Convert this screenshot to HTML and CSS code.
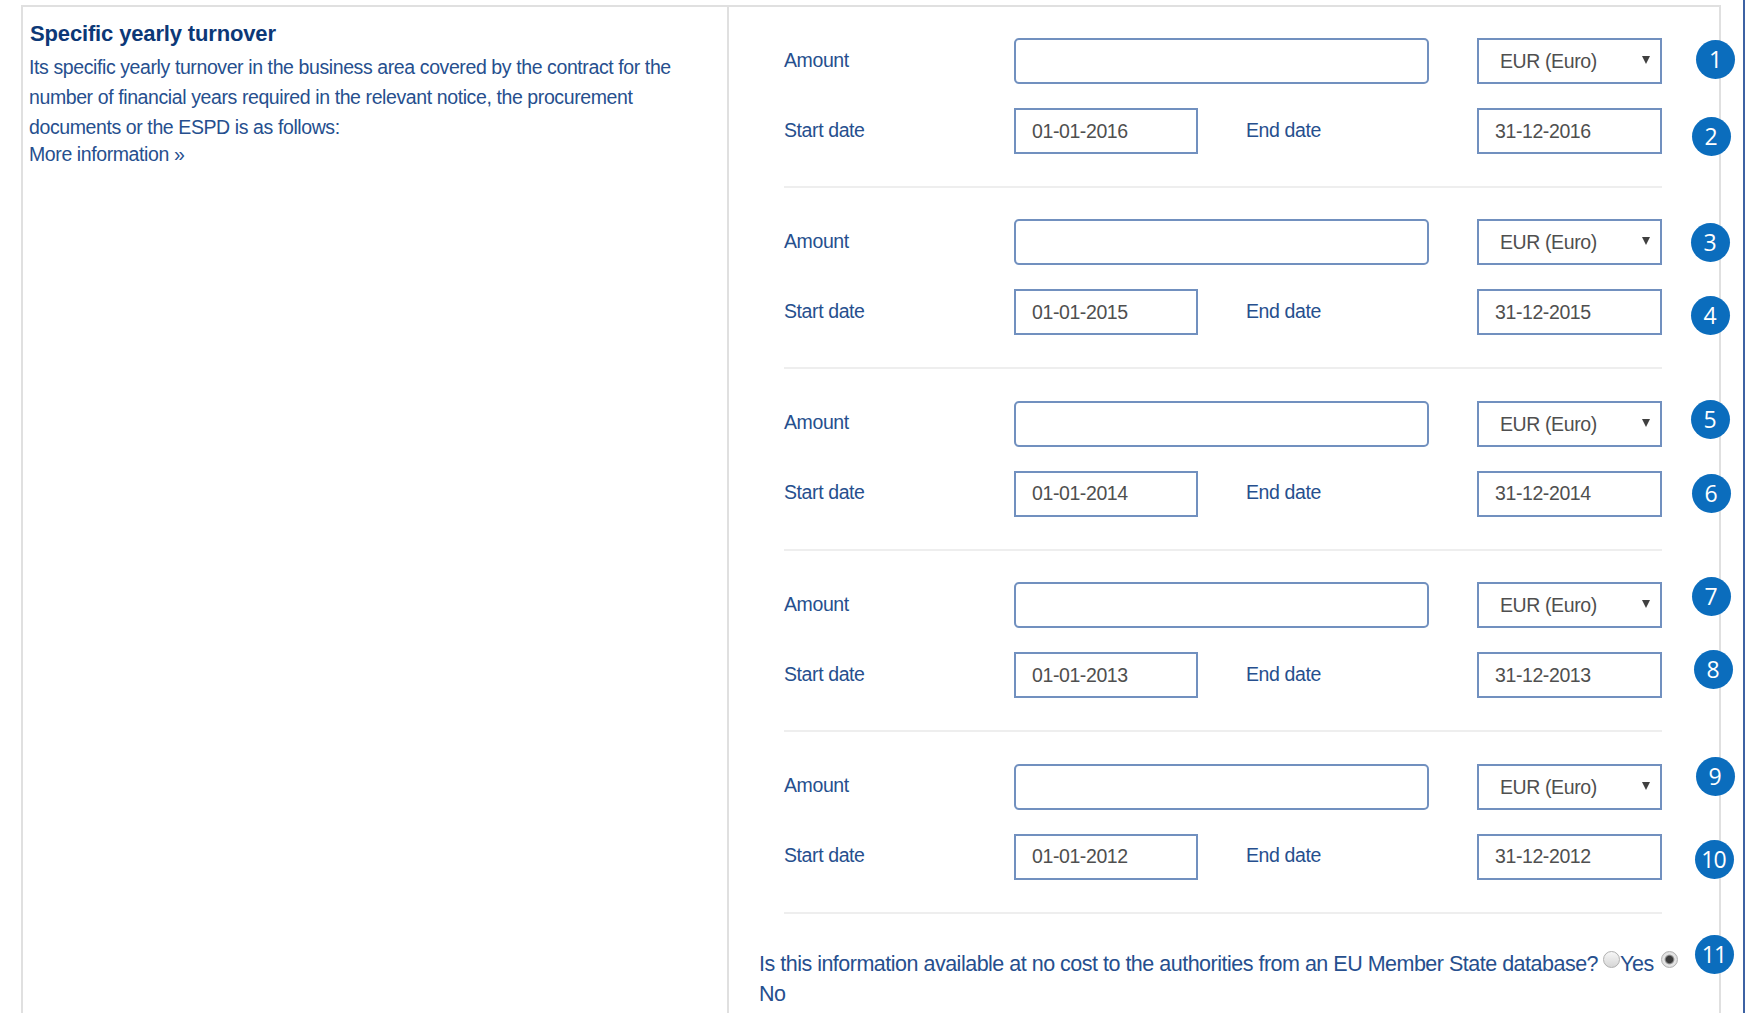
FILE: index.html
```html
<!DOCTYPE html>
<html lang="en">
<head>
<meta charset="utf-8">
<title>Specific yearly turnover</title>
<link rel="stylesheet" href="styles.css">
</head>
<body>
<div class="page">
  <div class="panel">
    <div class="info">
      <h2 class="title">Specific yearly turnover</h2>
      <p class="desc">Its specific yearly turnover in the business area covered by the contract for the number of financial years required in the relevant notice, the procurement documents or the ESPD is as follows:</p>
      <a class="more" href="#">More information &raquo;</a>
    </div>
    <div class="form">
      <div class="group">
        <span class="label">Amount</span>
        <input class="field amount" type="text" value="">
        <div class="select-wrap"><select class="select"><option>EUR (Euro)</option></select><span class="arrow"></span></div>
        <span class="label">Start date</span>
        <input class="field start" type="text" value="01-01-2016">
        <span class="label end-label">End date</span>
        <input class="field end" type="text" value="31-12-2016">
      </div>
      <div class="group">
        <span class="label">Amount</span>
        <input class="field amount" type="text" value="">
        <div class="select-wrap"><select class="select"><option>EUR (Euro)</option></select><span class="arrow"></span></div>
        <span class="label">Start date</span>
        <input class="field start" type="text" value="01-01-2015">
        <span class="label end-label">End date</span>
        <input class="field end" type="text" value="31-12-2015">
      </div>
      <div class="group">
        <span class="label">Amount</span>
        <input class="field amount" type="text" value="">
        <div class="select-wrap"><select class="select"><option>EUR (Euro)</option></select><span class="arrow"></span></div>
        <span class="label">Start date</span>
        <input class="field start" type="text" value="01-01-2014">
        <span class="label end-label">End date</span>
        <input class="field end" type="text" value="31-12-2014">
      </div>
      <div class="group">
        <span class="label">Amount</span>
        <input class="field amount" type="text" value="">
        <div class="select-wrap"><select class="select"><option>EUR (Euro)</option></select><span class="arrow"></span></div>
        <span class="label">Start date</span>
        <input class="field start" type="text" value="01-01-2013">
        <span class="label end-label">End date</span>
        <input class="field end" type="text" value="31-12-2013">
      </div>
      <div class="group">
        <span class="label">Amount</span>
        <input class="field amount" type="text" value="">
        <div class="select-wrap"><select class="select"><option>EUR (Euro)</option></select><span class="arrow"></span></div>
        <span class="label">Start date</span>
        <input class="field start" type="text" value="01-01-2012">
        <span class="label end-label">End date</span>
        <input class="field end" type="text" value="31-12-2012">
      </div>
      <p class="question">Is this information available at no cost to the authorities from an EU Member State database?<span class="radio first"></span>Yes <span class="radio checked"></span><wbr>No</p>
    </div>
  </div>
  <div class="frame-line"></div>

  <span class="badge b1">1</span>
  <span class="badge b2">2</span>
  <span class="badge b3">3</span>
  <span class="badge b4">4</span>
  <span class="badge b5">5</span>
  <span class="badge b6">6</span>
  <span class="badge b7">7</span>
  <span class="badge b8">8</span>
  <span class="badge b9">9</span>
  <span class="badge b10 two">10</span>
  <span class="badge b11 two">11</span>
</div>
</body>
</html>
```
FILE: styles.css
```css
html, body {
  margin: 0;
  padding: 0;
  background: #ffffff;
}

body {
  font-family: "Liberation Sans", Arial, sans-serif;
  color: #264f8e;
}

.page {
  position: relative;
  display: flex;
  align-items: stretch;
  height: 1013px;
  overflow: hidden;
}

.panel {
  box-sizing: border-box;
  width: 1700px;
  margin: 5px 0 0 21px;
  display: flex;
  align-items: stretch;
  border: 2px solid #e0e0e0;
  border-bottom: none;
}

/* left column */
.info {
  box-sizing: border-box;
  flex: 0 0 706px;
  border-right: 2px solid #e0e0e0;
  padding: 14px 20px 0 6px;
}

.title {
  margin: 0 0 4.5px 1px;
  font-size: 22px;
  line-height: 26px;
  font-weight: bold;
  letter-spacing: -0.15px;
  color: #0c3877;
}

.desc {
  margin: 0;
  font-size: 19.5px;
  line-height: 30px;
  letter-spacing: -0.4px;
  color: #264f8e;
}

.more {
  display: block;
  font-size: 19.5px;
  line-height: 25px;
  letter-spacing: -0.4px;
  color: #264f8e;
  text-decoration: none;
}

/* right column */
.form {
  box-sizing: border-box;
  flex: 1 1 auto;
  padding: 31px 30px 60px 30px;
}

.group {
  display: grid;
  grid-template-columns: 230px 184px 48px 183px 48px 185px;
  grid-template-rows: 46px 46px;
  row-gap: 24px;
  align-items: center;
  width: 878px;
  margin: 0 0 31.4px 25px;
  padding-bottom: 32px;
  border-bottom: 2px solid #eeeeee;
}

.label {
  font-size: 19.5px;
  letter-spacing: -0.4px;
  color: #264f8e;
  margin-bottom: 2px;
}

.end-label {
  grid-column: 4;
}

.field {
  box-sizing: border-box;
  height: 46px;
  margin: 0;
  padding: 0 16px;
  border: 2px solid #7190bf;
  border-radius: 0;
  background: #ffffff;
  font-family: "Liberation Sans", Arial, sans-serif;
  font-size: 19.5px;
  letter-spacing: -0.4px;
  color: #4f4f4f;
  outline: none;
  width: 100%;
}

.amount {
  grid-column: 2 / 5;
  border-radius: 5px;
}

.start {
  grid-column: 2;
}

.end {
  grid-column: 6;
}

.select-wrap {
  grid-column: 6;
  position: relative;
  height: 46px;
}

.select {
  appearance: none;
  -webkit-appearance: none;
  box-sizing: border-box;
  width: 100%;
  height: 46px;
  margin: 0;
  padding: 0 0 0 21px;
  border: 2px solid #7190bf;
  border-radius: 0;
  background: #ffffff;
  font-family: "Liberation Sans", Arial, sans-serif;
  font-size: 19.5px;
  letter-spacing: -0.4px;
  color: #4f4f4f;
  outline: none;
}

.arrow {
  position: absolute;
  right: 12px;
  top: 18px;
  width: 0;
  height: 0;
  border-left: 4.5px solid transparent;
  border-right: 4.5px solid transparent;
  border-top: 8px solid #404040;
}

.question {
  margin: 0;
  padding-top: 4px;
  font-size: 21.5px;
  line-height: 30px;
  letter-spacing: -0.5px;
  color: #264f8e;
}

.radio {
  display: inline-block;
  box-sizing: border-box;
  width: 17px;
  height: 17px;
  border-radius: 50%;
  border: 1px solid #b0b0b0;
  background: linear-gradient(180deg, #f7f7f7 0%, #d6d6d6 100%);
  vertical-align: 3px;
  margin: 0 0 0 2px;
}

.radio.first {
  margin-left: 5px;
}

.radio.checked {
  background: radial-gradient(circle, #3a3a3a 0, #3a3a3a 3.2px, #8c8c8c 4.2px, #e6e6e6 5.4px, #d2d2d2 100%);
}

/* screenshot frame line on the right */
.frame-line {
  flex: 0 0 2px;
  margin-left: 22px;
  background: #3d62a3;
}

/* numbered annotation badges */
.badge {
  position: absolute;
  width: 39px;
  height: 39px;
  border-radius: 50%;
  background: #0b6dbd;
  color: #ffffff;
  font-family: "Open Sans", "Liberation Sans", sans-serif;
  font-size: 23px;
  line-height: 39px;
  text-align: center;
}

.badge.two {
  letter-spacing: -1px;
  text-indent: -1px;
}

.b1 { left: 1696px; top: 40px; }
.b2 { left: 1691.5px; top: 116.5px; }
.b3 { left: 1690.5px; top: 222.5px; }
.b4 { left: 1690.5px; top: 295.5px; }
.b5 { left: 1690.5px; top: 399.5px; }
.b6 { left: 1691.5px; top: 473.5px; }
.b7 { left: 1691.5px; top: 576.5px; }
.b8 { left: 1693.5px; top: 649.5px; }
.b9 { left: 1695.5px; top: 756.5px; }
.b10 { left: 1694.5px; top: 840px; }
.b11 { left: 1695px; top: 935px; }
```
